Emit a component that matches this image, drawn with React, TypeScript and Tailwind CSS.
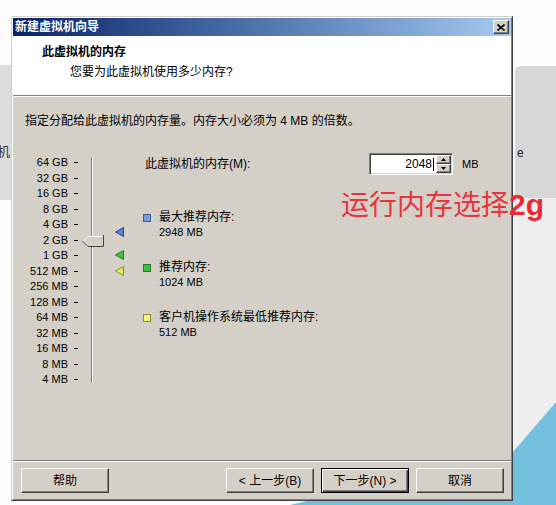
import React from 'react';

const levels = ['64 GB', '32 GB', '16 GB', '8 GB', '4 GB', '2 GB', '1 GB', '512 MB', '256 MB', '128 MB', '64 MB', '32 MB', '16 MB', '8 MB', '4 MB'];

const recs = [
  { label: '最大推荐内存:', value: '2948 MB', box: 'bg-[#7d9cd4] border-[#3c5a96]' },
  { label: '推荐内存:', value: '1024 MB', box: 'bg-[#3fbf3f] border-[#2a7a2a]' },
  { label: '客户机操作系统最低推荐内存:', value: '512 MB', box: 'bg-[#f5f57a] border-[#8a8a3a]' },
];

const raised =
  'bg-[#d4d0c8] border border-t-white border-l-white border-r-[#404040] border-b-[#404040] shadow-[inset_-1px_-1px_#808080]';

const Marker = ({ fill, edge, top }: { fill: string; edge: string; top: number }) => (
  <svg className="absolute left-[102px]" style={{ top }} width="10" height="10" viewBox="0 0 10 10">
    <polygon points="0.5,5 8.5,0.5 8.5,9.5" fill={fill} stroke={edge} strokeWidth="1" />
  </svg>
);

const Slider: React.FC = () => (
  <div className="relative w-[130px] h-[236px] flex">
    <div className="w-[65px] pt-[2px] flex flex-col">
      {levels.map((l) => (
        <div key={l} className="h-[15.5px] flex items-center">
          <span className="w-[55px] text-right text-[11px] leading-[15.5px]">{l}</span>
          <span className="ml-[6px] w-[4px] h-px bg-black" />
        </div>
      ))}
    </div>
    <div className="ml-[13px] mt-[4px] w-[2px] h-[226px] border-l border-l-[#808080] border-r border-r-white" />

    {/* thumb at 2 GB */}
    <svg className="absolute left-[69px] top-[82px]" width="22" height="12" viewBox="0 0 22 12">
      <polygon points="0.5,6 6,0.5 21.5,0.5 21.5,11.5 6,11.5" fill="#d4d0c8" />
      <polyline points="6,10.5 1.5,6 6,1.5 20.5,1.5" fill="none" stroke="#ffffff" />
      <polyline points="21.5,0 21.5,11.5 6,11.5 0.5,6" fill="none" stroke="#404040" />
    </svg>

    <Marker fill="#5b86d0" edge="#24468c" top={74} />
    <Marker fill="#44c244" edge="#1e7a1e" top={97} />
    <Marker fill="#eaea55" edge="#8a8a20" top={113} />
  </div>
);

const MemoryPanel: React.FC = () => (
  <div className="flex flex-col">
    <div className="h-[22px] flex items-center">
      <span className="pl-[2px] w-[226px] text-[12px]">此虚拟机的内存(M):</span>
      <div className="w-[84px] h-[22px] bg-white flex border border-t-[#808080] border-l-[#808080] border-r-white border-b-white shadow-[inset_1px_1px_#404040,inset_-1px_-1px_#d4d0c8]">
        <div className="flex-1 flex items-center justify-end pr-[2px] text-[12px]">
          2048<span className="ml-px w-px h-[13px] bg-black" />
        </div>
        <div className="w-[15px] my-[1px] mr-[1px] flex flex-col">
          <div className={`${raised} flex-1 flex items-center justify-center`}>
            <svg width="5" height="3" viewBox="0 0 5 3"><polygon points="2.5,0 5,3 0,3" fill="#000" /></svg>
          </div>
          <div className={`${raised} flex-1 flex items-center justify-center`}>
            <svg width="5" height="3" viewBox="0 0 5 3"><polygon points="0,0 5,0 2.5,3" fill="#000" /></svg>
          </div>
        </div>
      </div>
      <span className="ml-[9px] text-[11px]">MB</span>
    </div>

    <div className="mt-[35px] flex flex-col gap-[20px]">
      {recs.map((r) => (
        <div key={r.label} className="flex">
          <span className={`mt-[4px] w-[8px] h-[8px] border ${r.box}`} />
          <div className="ml-[8px] flex flex-col text-[12px] leading-[15px]">
            <span>{r.label}</span>
            <span className="text-[11px]">{r.value}</span>
          </div>
        </div>
      ))}
    </div>
  </div>
);

const App: React.FC = () => {
  return (
    <div className="relative w-[556px] h-[505px] overflow-hidden bg-[#fcfcfc] text-black font-['Liberation_Sans','Noto_Sans_CJK_SC',sans-serif]">
      {/* desktop behind the dialog */}
      <svg className="absolute inset-0" width="556" height="505" viewBox="0 0 556 505">
        <rect x="0" y="65" width="14" height="135" fill="#dcdcdc" />
        <rect x="513" y="198" width="43" height="307" fill="#efefef" />
        <path d="M515 72 Q515 66 521 66 L556 66 L556 198 L515 198 Z" fill="#d7d7d7" />
        <polygon points="556,402 513,452 290,505 556,505" fill="#72c0dd" />
      </svg>
      <span className="absolute left-[-3px] top-[142px] text-[13px] text-[#333]">机</span>
      <span className="absolute left-[517px] top-[144px] text-[12px] text-[#222]">e</span>

      {/* wizard window */}
      <div className="absolute left-[11px] top-[16px] w-[502px] h-[485px] flex flex-col border border-t-[#d4d0c8] border-l-[#d4d0c8] border-r-[#404040] border-b-[#404040] bg-[#d4d0c8]">
        <div className="flex-1 flex flex-col border border-t-white border-l-white border-r-[#808080] border-b-[#808080]">
          <div className="h-[18px] flex items-center justify-between bg-gradient-to-r from-[#0a246a] to-[#a6caf0]">
            <span className="pl-[2px] text-[12px] font-bold text-white">新建虚拟机向导</span>
            <div className={`${raised} mr-[2px] w-[16px] h-[14px] flex items-center justify-center`}>
              <svg width="8" height="7" viewBox="0 0 8 7">
                <path d="M0.5 0.5 L7.5 6.5 M7.5 0.5 L0.5 6.5" stroke="#000" strokeWidth="1.6" />
              </svg>
            </div>
          </div>

          <div className="h-[60px] bg-white border-b border-b-[#808080] shadow-[0_1px_0_#ffffff] pt-[8px] pl-[29px] text-[12px] leading-[16px]">
            <div className="font-bold">此虚拟机的内存</div>
            <div className="mt-[4px] pl-[28px]">您要为此虚拟机使用多少内存?</div>
          </div>

          <div className="h-[363px] mt-px pt-[16px]">
            <div className="pl-[12px] text-[12px] leading-[16px]">指定分配给此虚拟机的内存量。内存大小必须为 4 MB 的倍数。</div>
            <div className="mt-[24px] flex">
              <Slider />
              <MemoryPanel />
            </div>
          </div>

          <div className="border-t border-t-[#808080] shadow-[inset_0_1px_0_#ffffff] flex-1 flex items-start pt-[7px] pl-[8px] pr-[7px] text-[12px]">
            <button className={`${raised} h-[25px] w-[88px]`}>帮助</button>
            <div className="ml-auto flex gap-[7px]">
              <button className={`${raised} h-[25px] w-[88px]`}>&lt; 上一步(B)</button>
              <button className="h-[25px] w-[88px] bg-[#d4d0c8] border border-black shadow-[inset_1px_1px_#ffffff,inset_-1px_-1px_#404040,inset_-2px_-2px_#808080]">下一步(N) &gt;</button>
              <button className={`${raised} h-[25px] w-[88px]`}>取消</button>
            </div>
          </div>
        </div>
      </div>

      <span className="absolute left-[341px] top-[190px] text-[28px] leading-none text-[#e8343c] whitespace-nowrap">
        运行内存选择<span className="text-[30px] font-semibold text-[#ea2a34]">2g</span>
      </span>
    </div>
  );
};

export default App;
